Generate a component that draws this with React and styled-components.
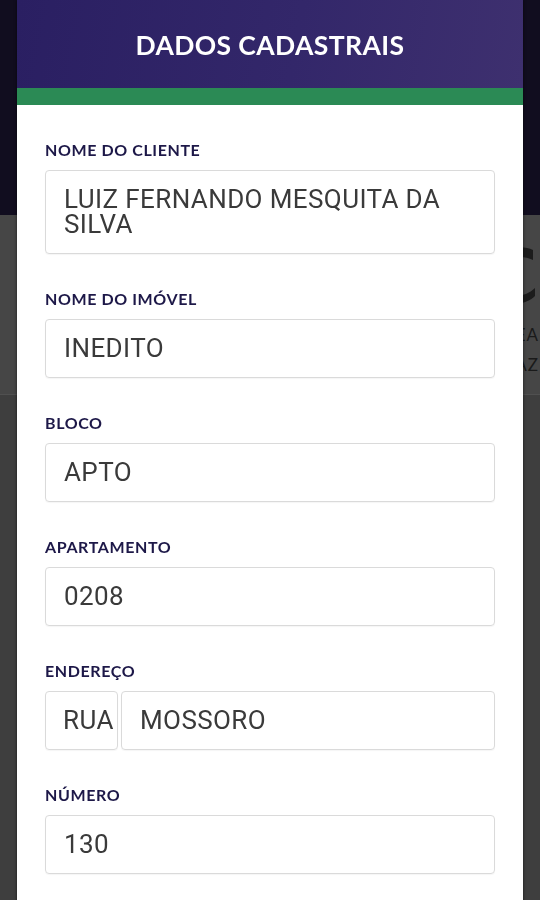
import styled, { createGlobalStyle } from "styled-components";

const Global = createGlobalStyle`
  * { box-sizing: border-box; }
  html, body { margin: 0; padding: 0; background: #3e3e3e; }
  body { font-family: "Roboto", "Liberation Sans", sans-serif; overflow: hidden; }
`;

const Page = styled.div`
  width: 540px;
  height: 900px;
  background: #3e3e3e;
  overflow: hidden;
`;

const TopBar = styled.div`
  height: 215px;
  background: #110d1f;
`;

const Banner = styled.div`
  height: 180px;
  background: #464646;
  border-bottom: 1px solid #505050;
  display: flex;
  justify-content: flex-end;
  align-items: center;
  padding-top: 10px;
`;

const Brand = styled.div`
  display: flex;
  flex-direction: column;
  align-items: flex-end;
  margin-right: 1px;
`;

const BrandText = styled.span`
  font-family: "Lato", "Liberation Sans", sans-serif;
  font-size: 17px;
  line-height: 30px;
  color: #1a1a1a;
  letter-spacing: 1px;
`;

const Overlay = styled.div`
  position: fixed;
  inset: 0;
  display: flex;
  justify-content: center;
  overflow: hidden;
`;

const Modal = styled.div`
  width: 506px;
  min-height: 100%;
  align-self: flex-start;
  background: #fff;
  box-shadow: 0 0 3px rgba(0, 0, 0, 0.6);
`;

const Header = styled.div`
  height: 88px;
  background: linear-gradient(100deg, #2a1f62 0%, #33276a 55%, #3e306f 100%);
  display: flex;
  align-items: center;
  justify-content: center;
  padding-top: 2px;
`;

const Title = styled.h1`
  margin: 0;
  font-family: "Lato", "Liberation Sans", sans-serif;
  font-weight: 700;
  font-size: 26.5px;
  color: #fff;
  letter-spacing: 0.4px;
`;

const Stripe = styled.div`
  height: 17px;
  background: #2b8a55;
`;

const Body = styled.div`
  padding: 37px 28px 0;
`;

const Field = styled.div`
  margin-bottom: 37px;
`;

const Label = styled.div`
  font-family: "Lato", "Liberation Sans", sans-serif;
  font-weight: 700;
  font-size: 16px;
  line-height: 16px;
  letter-spacing: 0.6px;
  color: #1d1848;
  margin-bottom: 12px;
`;

const Row = styled.div`
  display: flex;
  gap: 3px;
`;

const Input = styled.div`
  width: ${(p) => (p.width ? p.width + "px" : "auto")};
  flex: ${(p) => (p.width ? "none" : "1")};
  border: 1px solid #dadada;
  border-radius: 4px;
  padding: ${(p) => (p.width ? "16px 0 16px 17px" : "16px 18px")};
  font-size: 26px;
  line-height: 25px;
  letter-spacing: 0.4px;
  color: #3a3a3a;
  box-shadow: 0 1px 1px rgba(0, 0, 0, 0.04);
`;

const fields = [
  { label: "NOME DO CLIENTE", value: "LUIZ FERNANDO MESQUITA DA SILVA" },
  { label: "NOME DO IMÓVEL", value: "INEDITO" },
  { label: "BLOCO", value: "APTO" },
  { label: "APARTAMENTO", value: "0208" },
];

export default function App() {
  return (
    <>
      <Global />
      <Page>
        <TopBar />
        <Banner>
          <Brand>
            <svg width="40" height="80" viewBox="0 0 40 80">
              <path d="M6 12 C14 6 26 6 34 10 L34 20 C26 16 16 16 10 20 Z" fill="#1c1c1c" />
              <path d="M4 60 C14 66 28 64 36 56 L36 48 C28 56 16 58 6 54 Z" fill="#1c1c1c" />
            </svg>
            <BrandText>REA</BrandText>
            <BrandText>RAZ</BrandText>
          </Brand>
        </Banner>
      </Page>
      <Overlay>
        <Modal>
          <Header>
            <Title>DADOS CADASTRAIS</Title>
          </Header>
          <Stripe />
          <Body>
            {fields.map((f) => (
              <Field key={f.label}>
                <Label>{f.label}</Label>
                <Input>{f.value}</Input>
              </Field>
            ))}
            <Field>
              <Label>ENDEREÇO</Label>
              <Row>
                <Input width={73}>RUA</Input>
                <Input>MOSSORO</Input>
              </Row>
            </Field>
            <Field>
              <Label>NÚMERO</Label>
              <Input>130</Input>
            </Field>
          </Body>
        </Modal>
      </Overlay>
    </>
  );
}
